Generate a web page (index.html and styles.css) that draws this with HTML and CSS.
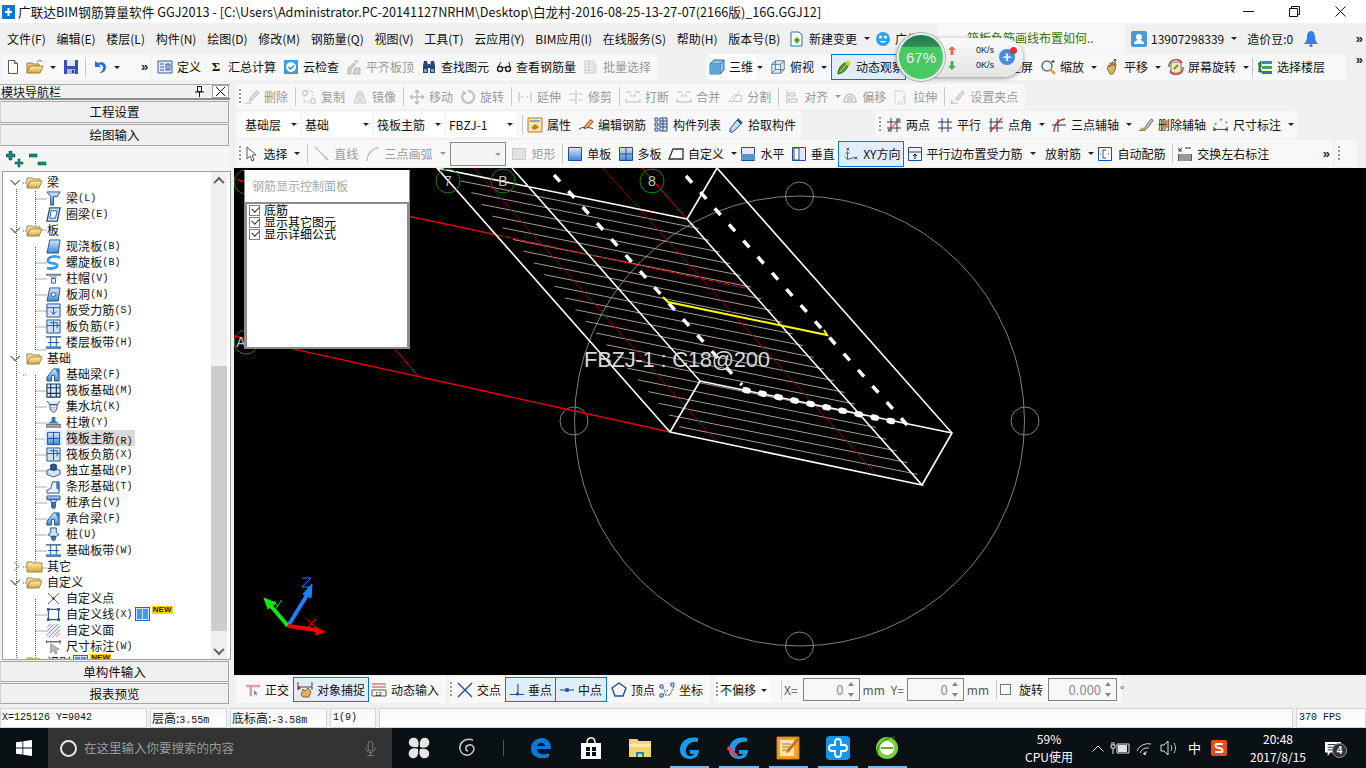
FILE: index.html
```html
<!DOCTYPE html>
<html lang="zh-CN">
<head>
<meta charset="utf-8">
<title>广联达BIM钢筋算量软件 GGJ2013</title>
<link rel="stylesheet" href="styles.css">
</head>
<body>
<svg class="defs" width="0" height="0" aria-hidden="true">
<defs>
<linearGradient id="bl" x1="0" y1="0" x2="0" y2="1"><stop offset="0" stop-color="#d6e9fb"/><stop offset="1" stop-color="#3d86d6"/></linearGradient>
<linearGradient id="fo" x1="0" y1="0" x2="0" y2="1"><stop offset="0" stop-color="#fff2b8"/><stop offset="1" stop-color="#d9a23a"/></linearGradient>
<symbol id="new" viewBox="0 0 16 16"><path d="M3.5 1.5h6l3 3v10h-9z" fill="#fffef2" stroke="#555"/><path d="M9.5 1.5v3h3" fill="#ddd" stroke="#555"/></symbol>
<symbol id="open" viewBox="0 0 18 16"><path d="M1 14V4h5l1 1h6v2" fill="#e9c873" stroke="#a27c2c"/><path d="M1 14l3-7h13l-3 7z" fill="url(#fo)" stroke="#a27c2c"/><path d="M11 3l3-2 2 2" fill="none" stroke="#3d86d6"/></symbol>
<symbol id="save" viewBox="0 0 16 16"><path d="M1 1h14v14H1z" fill="#3b4fae"/><path d="M4 1h8v6H4z" fill="#dfe6f5"/><path d="M4 10h8v5H4z" fill="#a5b5dc"/><path d="M9 11h2v3H9z" fill="#333f80"/></symbol>
<symbol id="undo" viewBox="0 0 16 16"><path d="M3 2v6h6L7 6c3-1 5 1 4 4-.4 1.4-2 3-4 4 4 0 7-2 7-6 0-4-4-6-8-4z" fill="#2f6fc2"/></symbol>
<symbol id="def" viewBox="0 0 16 16"><path d="M1 2h14v12H1z" fill="#dfeafa" stroke="#3b5e96"/><path d="M3 5h4M3 8h4M3 11h4M9 5h4v6H9zM11 5v6" fill="none" stroke="#3b5e96"/></symbol>
<symbol id="cloud" viewBox="0 0 16 16"><path d="M1 1h14v14H1z" fill="#3a9be0"/><path d="M8 3a5 5 0 1 0 .01 0z" fill="#fff"/><path d="M5.500 8l2 2 3.500-3.500" fill="none" stroke="#2c86cf" stroke-width="1.500"/></symbol>
<symbol id="flat" viewBox="0 0 16 16"><path d="M2 15V9l6-5 1 2-4 4v5zM9 9h5v6H7z" fill="#d2d2d2" stroke="#b5b5b5"/><path d="M8 1l5 1-3 3z" fill="#c5c5c5"/></symbol>
<symbol id="bino" viewBox="0 0 16 16"><path d="M2 7l1-5h3l1 5v7H2zM9 7l1-5h3l1 5v7H9zM7 5h2v4H7z" fill="#26437a"/><path d="M3 10h3v3H3zM10 10h3v3h-3z" fill="#7da7e0"/></symbol>
<symbol id="glass" viewBox="0 0 16 16"><circle cx="4" cy="10" r="2.500" fill="none" stroke="#222" stroke-width="1.500"/><circle cx="12" cy="10" r="2.500" fill="none" stroke="#222" stroke-width="1.500"/><path d="M6 9c1-1 3-1 4 0M2 8l3-5M14 8l-1-5" fill="none" stroke="#222"/></symbol>
<symbol id="batch" viewBox="0 0 16 16"><path d="M2 2h9v12H2zM2 5h9M2 8h9M2 11h9M6 2v12M13 6v8" fill="none" stroke="#c8c8c8"/></symbol>
<symbol id="cube" viewBox="0 0 16 16"><path d="M1 5l4-4h10v10l-4 4H1z" fill="#8ec4ea" stroke="#2b6ea6"/><path d="M1 5h10v10M11 5l4-4" fill="none" stroke="#2b6ea6"/><path d="M1 5h10v10H1z" fill="#5da5da"/></symbol>
<symbol id="cube2" viewBox="0 0 18 16"><path d="M2 5l4-4h10v10l-4 4H2z" fill="#e3eff9" stroke="#4a6c8c"/><path d="M2 5h10v10M12 5l4-4M6 1v10h10M6 11l-4 4" fill="none" stroke="#4a6c8c"/></symbol>
<symbol id="orbit" viewBox="0 0 16 16"><path d="M2 15C2 9 6 4 12 3c1 6-4 11-10 12z" fill="#5a9c2a" stroke="#2d6614"/><circle cx="12" cy="4" r="2.500" fill="#e9c92c"/><path d="M4 13l7-8" stroke="#a9d46d"/></symbol>
<symbol id="zoomi" viewBox="0 0 16 16"><circle cx="7" cy="7" r="5" fill="#f3f7fc" stroke="#5b6f90" stroke-width="1.500"/><path d="M10 10l5 5" stroke="#d2a93a" stroke-width="2.500"/><path d="M13 1v3M11.500 2.500h3" stroke="#333"/></symbol>
<symbol id="hand" viewBox="0 0 16 16"><path d="M3 9l2-3 1 2V4l1 0 1 3V3l1 0 1 4 1-3 1 1-1 6-2 4H6z" fill="#dcb367" stroke="#8c6a2a"/><path d="M11 0v4M9.500 1.500L11 0l1.500 1.500" fill="none" stroke="#333"/></symbol>
<symbol id="rotate" viewBox="0 0 16 16"><path d="M3 3h10v11H3z" fill="#fbe8a5" stroke="#2c86cf"/><path d="M1 8a7 7 0 0 1 13-4" fill="none" stroke="#d43c2a" stroke-width="1.500"/><path d="M15 8a7 7 0 0 1-13 4" fill="none" stroke="#d43c2a" stroke-width="1.500"/><path d="M6 10l4-4" stroke="#57a13a" stroke-width="2"/></symbol>
<symbol id="floors" viewBox="0 0 16 16"><path d="M5 2h10v3H5z" fill="#2f8ad6"/><path d="M5 7h10v3H5z" fill="#41a85a"/><path d="M5 12h10v3H5z" fill="#2f6fc2"/><path d="M1 5l3-3v6zM2 4v9h3" fill="#1d7a3c" stroke="#1d7a3c"/></symbol>
<symbol id="gdel" viewBox="0 0 18 16"><path d="M1 15h7M14 1l3 2-8 9-3-2z" fill="#dadada" stroke="#bbb"/><path d="M6 10l-1 4 4-2z" fill="#c7c7c7"/></symbol>
<symbol id="gcopy" viewBox="0 0 16 16"><circle cx="4" cy="4" r="2.500" fill="none" stroke="#bbb"/><circle cx="12" cy="12" r="2.500" fill="none" stroke="#bbb"/><path d="M6 2h6v6M3 7v6h6" fill="none" stroke="#c8c8c8" stroke-dasharray="2 1"/></symbol>
<symbol id="gmirror" viewBox="0 0 16 16"><path d="M8 1v14M6 3L2 14h4zM10 3l4 11h-4z" fill="none" stroke="#c0c0c0"/></symbol>
<symbol id="gmove" viewBox="0 0 16 16"><path d="M8 1v14M1 8h14M8 1L6 3.500M8 1l2 2.500M8 15l-2-2.500M8 15l2-2.500M1 8l2.500-2M1 8l2.500 2M15 8l-2.500-2M15 8l-2.500 2" fill="none" stroke="#bcbcbc" stroke-width="1.300"/></symbol>
<symbol id="grot" viewBox="0 0 16 16"><path d="M8 2a6 6 0 1 1-5 3" fill="none" stroke="#c6c6c6" stroke-width="2.500"/><path d="M2 1l1 6 4-3z" fill="#c6c6c6"/></symbol>
<symbol id="gext" viewBox="0 0 16 16"><path d="M2 3v10M14 3v10" stroke="#bbb"/><path d="M4 8h3M9 8h3" stroke="#bbb" stroke-dasharray="2 1"/></symbol>
<symbol id="gtrim" viewBox="0 0 16 16"><path d="M8 1v14" stroke="#bbb"/><path d="M1 5h6M1 11h6M10 5h5M10 11h5" stroke="#c8c8c8"/></symbol>
<symbol id="gbreak" viewBox="0 0 16 16"><path d="M1 3h5M10 3h5M1 13h14M1 13v-3M15 13v-3" stroke="#bbb" fill="none"/><path d="M5 7h6M5 7l2-2M11 7L9 5" stroke="#c8c8c8" fill="none"/></symbol>
<symbol id="gsplit" viewBox="0 0 18 16"><path d="M2 13l6-7h8v7zM14 1l-8 13" fill="none" stroke="#c0c0c0"/></symbol>
<symbol id="galign" viewBox="0 0 16 16"><path d="M3 1v14M5 4h6v3H5zM5 10h8v3H5z" fill="none" stroke="#bbb"/></symbol>
<symbol id="goff" viewBox="0 0 16 16"><path d="M2 13a6 8 0 0 1 12 0z" fill="none" stroke="#c5c5c5" stroke-width="1.500"/><path d="M5 11a3 4 0 0 1 6 0z" fill="#ddd" stroke="#c5c5c5"/></symbol>
<symbol id="gstretch" viewBox="0 0 16 16"><path d="M2 2h7l3 3v10H2zM5 13h8M11 7v6" fill="none" stroke="#c6c6c6" stroke-dasharray="2 1"/></symbol>
<symbol id="gpts" viewBox="0 0 18 16"><path d="M1 15h8M14 1l2 2-7 9-3-2z" fill="#ddd" stroke="#bbb"/><path d="M1 12h2v3H1z" fill="#bbb"/></symbol>
<symbol id="attr" viewBox="0 0 16 16"><path d="M1 1h14v14H1z" fill="#fbe7b8" stroke="#bb7a1c"/><path d="M3 3h10v2H3z" fill="#7da7e0"/><path d="M4 11l4-4 4 3-4 3z" fill="#c97b14"/></symbol>
<symbol id="edit" viewBox="0 0 18 16"><path d="M1 13c3-3 9-3 16-1" fill="none" stroke="#222"/><path d="M8 9l6-7 3 2-6 7-4 1z" fill="#e8b54b" stroke="#9a2a2a"/></symbol>
<symbol id="list" viewBox="0 0 16 16"><path d="M2 1h3v3H2zM2 6h3v3H2zM2 11h3v3H2zM7 1h7v13H7zM7 4h7M7 7h7M7 10h7M10 1v13" fill="#dfeafa" stroke="#2b4f80"/></symbol>
<symbol id="pick" viewBox="0 0 16 16"><path d="M9 3l4 4-8 8-3 0 0-3z" fill="#bcd8f2" stroke="#27508a"/><path d="M10 1l5 5-2 1-4-4z" fill="#2b4f80"/></symbol>
<symbol id="two" viewBox="0 0 16 16"><path d="M1 5h14M1 11h14M5 1v14M11 1v14" stroke="#233a6e"/><path d="M2 15L14 1" stroke="#d13a2a"/><circle cx="3" cy="13" r="1.300" fill="#2c9a3a"/><circle cx="13" cy="3" r="1.300" fill="#2c9a3a"/></symbol>
<symbol id="para" viewBox="0 0 16 16"><path d="M1 5h14M1 11h14M5 1v14M11 1v14" stroke="#233a6e" fill="none"/></symbol>
<symbol id="angle" viewBox="0 0 16 16"><path d="M3 1v14M9 1v14M1 5h14M1 11h14" stroke="#233a6e"/><path d="M2 15L14 1" stroke="#d13a2a" stroke-width="1.300"/></symbol>
<symbol id="arc3" viewBox="0 0 16 16"><path d="M3 15C3 7 7 3 14 2" fill="none" stroke="#d13a2a" stroke-width="1.300"/><path d="M1 8h14M7 2v13" stroke="#233a6e"/></symbol>
<symbol id="delax" viewBox="0 0 18 16"><path d="M1 14h8" stroke="#456"/><path d="M9 9l6-8 2 2-6 8-4 2z" fill="#e4c58b" stroke="#3a5a96"/><path d="M3 11h5v3H3z" fill="#c9a14a"/></symbol>
<symbol id="dim" viewBox="0 0 18 16"><path d="M1 10v5M16 10v5M1 13h15M1 13l2-1M1 13l2 1M16 13l-2-1M16 13l-2 1" stroke="#333" fill="none"/><path d="M2 6h2v2H2zM8 1h2v2H8zM14 4h2v2h-2z" fill="#38a84b"/></symbol>
<symbol id="arrow" viewBox="0 0 16 16"><path d="M4 1v12l3-3 2 5 2-1-2-5h4z" fill="#fff" stroke="#555"/></symbol>
<symbol id="gline" viewBox="0 0 16 16"><path d="M1 1l13 13" stroke="#bbb" stroke-width="1.300"/><path d="M14 14l-4-1 3-3z" fill="#c6c6c6"/></symbol>
<symbol id="garc" viewBox="0 0 16 16"><path d="M2 15C2 8 6 4 12 2" fill="none" stroke="#bbb" stroke-width="1.300"/><circle cx="12" cy="2" r="1.500" fill="#ccc"/><circle cx="5" cy="7" r="1.300" fill="#ccc"/></symbol>
<symbol id="grect" viewBox="0 0 16 16"><path d="M1.500 2.500h13v11h-13z" fill="#e2e2e2" stroke="#c9c9c9"/></symbol>
<symbol id="single" viewBox="0 0 16 16"><path d="M1.500 1.500h13v13h-13z" fill="url(#bl)" stroke="#224f90"/></symbol>
<symbol id="multi" viewBox="0 0 16 16"><path d="M1.500 1.500h13v13h-13z" fill="url(#bl)" stroke="#224f90"/><path d="M8 1v14M1 8h14" stroke="#224f90"/></symbol>
<symbol id="cust" viewBox="0 0 16 16"><path d="M1 13l4-10h10v10z" fill="#fff" stroke="#333" stroke-width="1.300"/></symbol>
<symbol id="horiz" viewBox="0 0 16 16"><path d="M1.500 1.500h13v13h-13z" fill="#dfeafa" stroke="#224f90"/><path d="M1 8h14v6H1z" fill="#5b92d4"/></symbol>
<symbol id="vert" viewBox="0 0 16 16"><path d="M1.500 1.500h13v13h-13z" fill="#dfeafa" stroke="#224f90"/><path d="M3 2h5v12H3z" fill="#fff" stroke="#224f90"/></symbol>
<symbol id="xy" viewBox="0 0 18 16"><path d="M5 6v8M5 14l8-2" fill="none" stroke="#1d4f96"/><path d="M4 1l3 3M7 1L4 4M13 11l3 3M16 11l-3 3" stroke="#333"/><path d="M3 8l2-3 2 3M2 11l3 3" stroke="#2b8a3a" fill="none"/></symbol>
<symbol id="parb" viewBox="0 0 16 16"><path d="M1.500 1.500h13v13h-13z" fill="#eaf2fb" stroke="#224f90"/><path d="M1 6h14" stroke="#224f90"/><path d="M8 13V8M6 10l2-2 2 2" stroke="#111" fill="none"/></symbol>
<symbol id="auto" viewBox="0 0 16 16"><path d="M1.500 1.500h13v13h-13z" fill="#fff" stroke="#1d4f96"/><path d="M9 4H6v8h3" fill="none" stroke="#1d4f96"/><path d="M3 8h2M11 8h2" stroke="#1d4f96" stroke-dasharray="1 1"/></symbol>
<symbol id="swap" viewBox="0 0 16 16"><path d="M1 8h14v7H1z" fill="#555"/><path d="M3 8v7M5 8v7M7 8v7M9 8v7M11 8v7M13 8v7" stroke="#ddd"/><path d="M2 5l3-3M8 2h6M2 2v3h3" stroke="#333" fill="none"/></symbol>
<symbol id="ortho" viewBox="0 0 18 16"><path d="M1 2h16v3H1zM5 2h3v13H5z" fill="#d9a3a3"/><path d="M10 8v6l1.500-1.500 1 2 1-.5-1-2h2z" fill="#888"/></symbol>
<symbol id="snap" viewBox="0 0 16 16"><path d="M1 0v8M15 0v8M1 5h14" stroke="#7a2a2a"/><path d="M4 13l2-6 2 2 3-3 3 4-2 5H6z" fill="#d8b45e" stroke="#8c6a2a"/><circle cx="2" cy="6" r="1.500" fill="#9a3a2a"/></symbol>
<symbol id="dyn" viewBox="0 0 16 16"><path d="M1 2h14M1 5h14" stroke="#a84a4a"/><path d="M1 8h14v6H1z" fill="#fff" stroke="#555"/><text x="4" y="13.500" font-size="6" font-family="Liberation Sans">12</text></symbol>
<symbol id="cross" viewBox="0 0 16 16"><path d="M1 1l14 14M15 1L1 15" stroke="#1d4f96" stroke-width="1.400"/></symbol>
<symbol id="perp" viewBox="0 0 18 16"><path d="M1 13h16M10 1v12" stroke="#1d4f96" stroke-width="1.200"/><path d="M8 11h3v3H8z" fill="#1d4f96"/></symbol>
<symbol id="mid" viewBox="0 0 18 16"><path d="M1 8h16" stroke="#1d4f96" stroke-width="1.200"/><path d="M7 6h4v4H7z" fill="#1d4f96"/></symbol>
<symbol id="vertex" viewBox="0 0 16 16"><path d="M8 1l7 5-3 8H4L1 6z" fill="none" stroke="#1d4f96" stroke-width="1.400"/></symbol>
<symbol id="coord" viewBox="0 0 16 16"><path d="M3 13h8l4-9M3 13l6-5M3 5l3 4" fill="none" stroke="#1d4f96" stroke-dasharray="2 1"/><path d="M1 3h3v3H1zM12 1h3v3h-3zM1 12h3v3H1z" fill="#fff" stroke="#1d4f96"/></symbol>
<symbol id="doc" viewBox="0 0 16 16"><path d="M2 1h8l3 3v11H2z" fill="#fff" stroke="#2b6ea6"/><path d="M5 9l3-3 3 3-3 4z" fill="#4da326"/></symbol>
<symbol id="smile" viewBox="0 0 16 16"><circle cx="8" cy="8" r="7" fill="#29a3ea"/><circle cx="5.500" cy="6" r="1.600" fill="#fff"/><circle cx="10.500" cy="6" r="1.600" fill="#fff"/><path d="M5 10c1 2 5 2 6 0z" fill="#fff"/></symbol>
<symbol id="user" viewBox="0 0 16 16"><path d="M0 2a2 2 0 0 1 2-2h12a2 2 0 0 1 2 2v12a2 2 0 0 1-2 2H2a2 2 0 0 1-2-2z" fill="#4b9ad6"/><circle cx="8" cy="6" r="3" fill="#fff"/><path d="M3 13c0-3 3-4 5-4s5 1 5 4z" fill="#fff"/></symbol>
<symbol id="bell" viewBox="0 0 16 16"><path d="M8 0c-3 0-4 3-4 6 0 3-1 5-3 7h14c-2-2-3-4-3-7 0-3-1-6-4-6z" fill="#2f80ed"/><circle cx="8" cy="14.500" r="1.500" fill="#2f80ed"/></symbol>
<symbol id="tplus" viewBox="0 0 18 18"><path d="M3 0h3v3h3v3H6v3H3V6H0V3h3zM12 8h2v3h3v2h-3v3h-2v-3H9v-2h3z" fill="#17897c" stroke="#083f3a" stroke-width=".5"/></symbol>
<symbol id="tminus" viewBox="0 0 18 18"><path d="M0 3h8v3H0zM9 11h8v3H9z" fill="#17897c" stroke="#083f3a" stroke-width=".5"/></symbol>
<symbol id="fopen" viewBox="0 0 17 13"><path d="M1 12V2h5l1 1h7v2" fill="#f5e2a8" stroke="#a68338"/><path d="M1 12l3-7h12l-3 7z" fill="url(#fo)" stroke="#a68338"/></symbol>
<symbol id="fclose" viewBox="0 0 17 13"><path d="M1 12V2h5l1 1h9v9z" fill="url(#fo)" stroke="#a68338"/></symbol>
<symbol id="beam" viewBox="0 0 16 16"><path d="M1 1h14l-3 5H8v9H5V6z" fill="url(#bl)" stroke="#224f90"/></symbol>
<symbol id="ring" viewBox="0 0 16 16"><path d="M4 1h11l-3 14H1z" fill="#dfeafa" stroke="#224f90" stroke-width="1.400"/><path d="M5.500 4h6.500l-2 8H4z" fill="#fff" stroke="#224f90"/></symbol>
<symbol id="slab" viewBox="0 0 16 16"><path d="M4 1h11l-2 14H1z" fill="url(#bl)" stroke="#224f90"/></symbol>
<symbol id="spiral" viewBox="0 0 16 16"><path d="M15 3C9 0 2 2 2 6s10 2 10 5-6 4-11 3" fill="none" stroke="#3f9be6" stroke-width="3"/></symbol>
<symbol id="cap" viewBox="0 0 16 16"><path d="M0 3h16v2H0z" fill="#777"/><path d="M3 5h10l-3 3H6z" fill="#9ac0ea"/><path d="M6 8h4v5H6z" fill="#fff" stroke="#224f90"/></symbol>
<symbol id="hole" viewBox="0 0 16 16"><path d="M4 1h11l-2 14H1z" fill="url(#bl)" stroke="#224f90"/><ellipse cx="8" cy="8" rx="2.500" ry="2" fill="#fff" stroke="#224f90"/></symbol>
<symbol id="rebar" viewBox="0 0 16 16"><path d="M1 1h14v14H1z" fill="#cfe2f7" stroke="#224f90"/><path d="M1 5h14M8 5v7M5 9l3 3 3-3" fill="none" stroke="#224f90"/></symbol>
<symbol id="neg" viewBox="0 0 16 16"><path d="M1 1h14v14H1z" fill="#cfe2f7" stroke="#224f90"/><path d="M1 7h14M4 4h8v6M8 2v12" fill="none" stroke="#224f90"/></symbol>
<symbol id="band" viewBox="0 0 16 16"><path d="M0 2h16M0 14h16" stroke="#224f90" stroke-width="1.500"/><path d="M5 2v12M11 2v12M2 8h12" stroke="#224f90"/><path d="M0 12h16v2H0z" fill="#4a8ad0"/></symbol>
<symbol id="fbeam" viewBox="0 0 16 16"><path d="M1 15V11L8 2h6v13H9V9H6v6z" fill="url(#bl)" stroke="#224f90"/><path d="M10 2l4 0 0 9z" fill="#3b77bd"/></symbol>
<symbol id="raft" viewBox="0 0 16 16"><path d="M1 1h14v14H1zM1 5h14M1 11h14M5 1v14M11 1v14" fill="#dce9f8" stroke="#12346a" stroke-width="1.200"/></symbol>
<symbol id="pit" viewBox="0 0 16 16"><path d="M1 2l3 4h8l3-4M4 6c0 5 2 8 4 8s4-3 4-8z" fill="#dfeafa" stroke="#224f90"/><path d="M5 9h6M6 11h4" stroke="#7a8ea8" stroke-dasharray="1 1"/></symbol>
<symbol id="pier" viewBox="0 0 16 16"><path d="M6 2h4v4l4 3H2l4-3z" fill="#3b77bd"/><path d="M0 10h16v3H0z" fill="#aaa" stroke="#666"/></symbol>
<symbol id="iso" viewBox="0 0 16 16"><path d="M1 8l7-3 7 3v4l-7 3-7-3z" fill="#cfe2f7" stroke="#224f90"/><path d="M5 5V2l3-1 3 1v5l-3 1-3-1z" fill="#2b5a9a" stroke="#12346a"/></symbol>
<symbol id="strip" viewBox="0 0 16 16"><path d="M1 15V12l4-2 2-7h7v12z" fill="#e8f0fa" stroke="#224f90"/><path d="M11 3l3 0 0 9-3-2z" fill="#3b77bd"/></symbol>
<symbol id="pilecap" viewBox="0 0 16 16"><path d="M1 1h14v4H1z" fill="url(#bl)" stroke="#224f90"/><path d="M4 5h8l-2 3H6z" fill="#cfe2f7" stroke="#224f90"/><path d="M6 8h4v5l-2 2-2-2z" fill="#3b77bd" stroke="#224f90"/></symbol>
<symbol id="pile" viewBox="0 0 16 16"><path d="M5 1h6v5l3 2-3 2H5l-3-2 3-2z" fill="#cfe2f7" stroke="#224f90"/><path d="M6 10h4v3l-2 2-2-2z" fill="#3b77bd" stroke="#224f90"/></symbol>
<symbol id="cpt" viewBox="0 0 16 16"><path d="M2 2l12 12M14 2L2 14" stroke="#2b62a8"/><circle cx="8" cy="8" r="1.500" fill="#2b62a8"/></symbol>
<symbol id="cline" viewBox="0 0 16 16"><path d="M2.500 2.500h11v11h-11z" fill="none" stroke="#224f90" stroke-width="1.200"/><path d="M1 1h3v3H1zM12 1h3v3h-3zM1 12h3v3H1zM12 12h3v3h-3z" fill="#2b62a8"/></symbol>
<symbol id="cface" viewBox="0 0 16 16"><path d="M1 5l4-4M1 9l8-8M1 13L13 1M3 15L15 3M7 15l8-8M11 15l4-4" stroke="#3f7fc9"/></symbol>
<symbol id="cdim" viewBox="0 0 16 16"><path d="M0 1v4M15 1v4M0 3h15" stroke="#222"/><path d="M5 5v10l3-3 2 4 2-1-2-4h4z" fill="#bbb" stroke="#999"/></symbol>
<symbol id="win" viewBox="0 0 16 16"><path d="M0 2.300l6.500-.9v6.200H0zM7.300 1.300L16 0v7.600H7.300zM0 8.400h6.500v6.200L0 13.700zM7.300 8.400H16V16l-8.700-1.200z" fill="#fff"/></symbol>
<symbol id="mic" viewBox="0 0 14 20"><rect x="4" y="1" width="6" height="12" rx="3" fill="none" stroke="#8f8f8f"/><path d="M1 9c0 8 12 8 12 0M7 15v4M3 19h8" fill="none" stroke="#8f8f8f"/></symbol>
<symbol id="fan" viewBox="0 0 22 22"><g fill="#e6e6e6"><path d="M10 10C3 11 0 8 1 4s6-4 8-2 2 5 1 8z"/><path d="M12 10c-1-7 2-10 6-9s4 6 2 8-5 2-8 1z"/><path d="M12 12c7-1 10 2 9 6s-6 4-8 2-2-5-1-8z"/><path d="M10 12c1 7-2 10-6 9s-4-6-2-8 5-2 8-1z"/></g></symbol>
<symbol id="swirl" viewBox="0 0 20 20"><path d="M15 2c-8-3-14 3-13 9s8 8 12 4 1-9-3-8-4 5-1 6" fill="none" stroke="#c9c9c9" stroke-width="1.500"/></symbol>
<symbol id="edge" viewBox="0 0 22 22"><path d="M1 12C1 5 6 1 12 1c6 0 9 5 9 11H7c0 5 7 7 12 4v4c-7 3-18 1-18-8z" fill="#0a78d7"/><path d="M7 9h8c0-4-7-4-8 0z" fill="#0a1114"/></symbol>
<symbol id="store" viewBox="0 0 22 24"><path d="M1 7h20v16H1z" fill="#fff"/><path d="M7 7c0-7 8-7 8 0" fill="none" stroke="#fff" stroke-width="1.500"/><path d="M6 11h4v4H6zM12 11h4v4h-4zM6 16h4v4H6zM12 16h4v4h-4z" fill="#0a1114"/></symbol>
<symbol id="folder" viewBox="0 0 22 20"><path d="M0 1h8l2 2h12v16H0z" fill="#f5d66c"/><path d="M0 6h22v3H0z" fill="#fbe9a8"/><path d="M7 14h8v5H7z" fill="#1b83d4"/><path d="M9 16h4v3H9z" fill="#f5d66c"/></symbol>
<symbol id="gg" viewBox="0 0 24 24"><path d="M20 2c-10-2-18 3-18 12 0 6 5 9 10 9 6 0 9-4 9-9h-9v4h4c-1 2-3 2-4 2-3 0-5-3-4-7 1-5 6-8 12-7z" fill="#1a9be8"/></symbol>
<symbol id="gg2" viewBox="0 0 24 24"><path d="M20 2c-10-2-18 3-18 12 0 6 5 9 10 9 6 0 9-4 9-9h-9v4h4c-1 2-3 2-4 2-3 0-5-3-4-7 1-5 6-8 12-7z" fill="#1a9be8"/><path d="M1 10l10 9-2 3L0 13z" fill="#d8484a"/></symbol>
<symbol id="note" viewBox="0 0 24 24"><path d="M1 1h22v22H1z" fill="#f6a323" stroke="#c97a0a"/><path d="M4 4h14v16H4z" fill="#fde7a8"/><path d="M6 8h9M6 11h9M6 14h7" stroke="#a87a1a"/><path d="M21 2l2 2-10 12-3 1 1-3z" fill="#d3662a"/></symbol>
<symbol id="bplus" viewBox="0 0 24 24"><rect width="24" height="24" rx="4" fill="#1296f0"/><path d="M12 3a3 3 0 0 1 3 3v3h3a3 3 0 0 1 0 6h-3v3a3 3 0 0 1-6 0v-3H6a3 3 0 0 1 0-6h3V6a3 3 0 0 1 3-3z" fill="none" stroke="#fff" stroke-width="1.800"/></symbol>
<symbol id="ge" viewBox="0 0 24 24"><circle cx="12" cy="12" r="11" fill="#7bcf3a"/><circle cx="12" cy="12" r="7" fill="#fff"/><path d="M6 11h12v2H6z" fill="#5ab02a"/><path d="M3 20C0 12 6 2 20 1" fill="none" stroke="#1e7a2a"/></symbol>
<symbol id="sogou" viewBox="0 0 16 16"><rect width="16" height="16" rx="2" fill="#e8491d"/><path d="M12 4H6c-2 0-2 3 0 3.500l4 1c2 .5 2 3.500 0 3.500H4" fill="none" stroke="#fff" stroke-width="2"/></symbol>
<symbol id="wifi" viewBox="0 0 18 16"><path d="M1 11a12 12 0 0 1 14-7M4 13a8 8 0 0 1 9-5M7 14a4 4 0 0 1 4-2" fill="none" stroke="#d0d0d0"/><circle cx="9" cy="14" r="1" fill="#fff"/></symbol>
<symbol id="spk" viewBox="0 0 18 16"><path d="M1 5h3l4-4v14l-4-4H1z" fill="none" stroke="#e0e0e0"/><path d="M11 5c1 2 1 4 0 6M14 3c2 3 2 7 0 10" fill="none" stroke="#c9c9c9"/></symbol>
<symbol id="batt" viewBox="0 0 20 14"><path d="M7 3h12v9H7z" fill="none" stroke="#e0e0e0"/><path d="M8 4h9v7H8z" fill="#e0e0e0"/><path d="M1 4h4v3H1zM2 1v3M4 1v3M3 7v6" stroke="#e0e0e0" fill="none"/></symbol>
<symbol id="noti" viewBox="0 0 20 18"><path d="M1 1h18v12H7l-3 4v-4H1z" fill="#fff"/><path d="M4 4h12M4 7h12M4 10h8" stroke="#0a1114"/></symbol>
</defs>
</svg>

<div class="page">
  <header class="title">
    <svg class="ticon" viewBox="0 0 13 14"><rect width="13" height="14" fill="#0a78d7"/><path d="M6.500 3v8M3 7h7" stroke="#fff" stroke-width="2"/></svg>
    <span>广联达BIM钢筋算量软件 GGJ2013 - [C:\Users\Administrator.PC-20141127NRHM\Desktop\白龙村-2016-08-25-13-27-07(2166版)_16G.GGJ12]</span>
    <div class="winctl">
      <svg width="11" height="1" viewBox="0 0 11 1"><path d="M0 .5h11" stroke="#111"/></svg>
      <svg width="11" height="11" viewBox="0 0 11 11"><path d="M.5 2.500h8v8h-8zM2.500 2.500v-2h8v8h-2" fill="none" stroke="#111"/></svg>
      <svg width="11" height="11" viewBox="0 0 11 11"><path d="M.5.500l10 10M10.500.500l-10 10" stroke="#111"/></svg>
    </div>
  </header>

  <nav class="menu">
    <span>文件(F)</span><span>编辑(E)</span><span>楼层(L)</span><span>构件(N)</span><span>绘图(D)</span><span>修改(M)</span><span>钢筋量(Q)</span><span>视图(V)</span><span>工具(T)</span><span>云应用(Y)</span><span>BIM应用(I)</span><span>在线服务(S)</span><span>帮助(H)</span><span>版本号(B)</span>
    <div class="mextra">
      <span class="it"><svg class="ic"><use href="#doc"/></svg>新建变更<i class="dd"></i></span>
      <span class="it m11"><svg class="ic"><use href="#smile"/></svg>广告</span>
      <span class="tip">筏板负筋画线布置如何..</span>
      <span class="it m6"><svg class="ic"><use href="#user"/></svg>13907298339<i class="dd"></i></span>
      <span class="m10">造价豆:0</span>
      <svg class="ic m10 bell"><use href="#bell"/></svg>
      <b class="more mr">»</b>
    </div>
  </nav>

  <div class="bar tb1">
    <div class="grp g1a">
      <svg class="ic"><use href="#new"/></svg>
      <svg class="ic w18"><use href="#open"/></svg><i class="dd n4"></i>
      <svg class="ic m2"><use href="#save"/></svg>
      <i class="sep s3"></i>
      <svg class="ic"><use href="#undo"/></svg><i class="dd n4"></i>
      <b class="more m16">»</b>
    </div>
    <div class="grp g1b">
      <span class="it"><svg class="ic"><use href="#def"/></svg>定义</span>
      <span class="it"><b class="sigma">Σ</b>汇总计算</span>
      <span class="it"><svg class="ic"><use href="#cloud"/></svg>云检查</span>
      <span class="it off"><svg class="ic"><use href="#flat"/></svg>平齐板顶</span>
      <span class="it"><svg class="ic"><use href="#bino"/></svg>查找图元</span>
      <span class="it"><svg class="ic"><use href="#glass"/></svg>查看钢筋量</span>
      <span class="it off"><svg class="ic"><use href="#batch"/></svg>批量选择</span>
    </div>
    <b class="more g1more">»</b>
    <div class="grp g1c">
      <span class="it white"><svg class="ic"><use href="#cube"/></svg>三维</span><i class="dd d7"></i>
      <span class="it"><svg class="ic"><use href="#cube2"/></svg>俯视<i class="dd"></i></span>
      <span class="it on w75"><svg class="ic"><use href="#orbit"/></svg>动态观察</span>
      <span class="it m104">全屏</span>
      <span class="it"><svg class="ic"><use href="#zoomi"/></svg>缩放<i class="dd"></i></span>
      <span class="it"><svg class="ic"><use href="#hand"/></svg>平移<i class="dd"></i></span>
      <span class="it"><svg class="ic"><use href="#rotate"/></svg>屏幕旋转<i class="dd"></i></span>
      <i class="sep"></i>
      <span class="it"><svg class="ic"><use href="#floors"/></svg>选择楼层</span>
    </div>
    <b class="more mr">»</b>
  </div>

  <div class="work">
    <aside class="nav">
      <div class="navhead"><span>模块导航栏</span>
        <svg class="pin" width="9" height="11" viewBox="0 0 9 11"><path d="M2.500.500h4v5h-4zM0 6h9M4.500 6v5" fill="none" stroke="#111"/></svg>
        <span class="navx"><svg width="9" height="9" viewBox="0 0 9 9"><path d="M0 0l9 9M9 0L0 9" stroke="#111"/></svg></span>
      </div>
      <div class="navbtn">工程设置</div>
      <div class="navbtn">绘图输入</div>
      <div class="treetools">
        <svg width="18" height="18"><use href="#tplus"/></svg>
        <svg width="18" height="18"><use href="#tminus"/></svg>
      </div>
      <div class="treebox">
        <div class="tree">
          <svg class="guides" width="208" height="486" viewBox="0 0 208 486">
            <path d="M13.500 16v470M32.500 18v39H44M32.500 26H44M32.500 74v103H44M32.500 90H44M32.500 106H44M32.500 122H44M32.500 138H44M32.500 154H44M32.500 202v193H44M32.500 218H44M32.500 234H44M32.500 250H44M32.500 266H44M32.500 282H44M32.500 298H44M32.500 314H44M32.500 330H44M32.500 346H44M32.500 362H44M32.500 378H44M32.500 426v65H44M32.500 442H44M32.500 458H44M20 10h4M20 58h4M20 202h4M20 394h4M20 410h4" fill="none" stroke="#555" stroke-dasharray="1 1"/>
          </svg>
          <div class="r top"><i class="chev"></i><svg class="fd"><use href="#fopen"/></svg>梁</div>
          <div class="r"><svg class="ti"><use href="#beam"/></svg>梁<b>(L)</b></div>
          <div class="r"><svg class="ti"><use href="#ring"/></svg>圈梁<b>(E)</b></div>
          <div class="r top"><i class="chev"></i><svg class="fd"><use href="#fopen"/></svg>板</div>
          <div class="r"><svg class="ti"><use href="#slab"/></svg>现浇板<b>(B)</b></div>
          <div class="r"><svg class="ti"><use href="#spiral"/></svg>螺旋板<b>(B)</b></div>
          <div class="r"><svg class="ti"><use href="#cap"/></svg>柱帽<b>(V)</b></div>
          <div class="r"><svg class="ti"><use href="#hole"/></svg>板洞<b>(N)</b></div>
          <div class="r"><svg class="ti"><use href="#rebar"/></svg>板受力筋<b>(S)</b></div>
          <div class="r"><svg class="ti"><use href="#neg"/></svg>板负筋<b>(F)</b></div>
          <div class="r"><svg class="ti"><use href="#band"/></svg>楼层板带<b>(H)</b></div>
          <div class="r top"><i class="chev"></i><svg class="fd"><use href="#fopen"/></svg>基础</div>
          <div class="r"><svg class="ti"><use href="#fbeam"/></svg>基础梁<b>(F)</b></div>
          <div class="r"><svg class="ti"><use href="#raft"/></svg>筏板基础<b>(M)</b></div>
          <div class="r"><svg class="ti"><use href="#pit"/></svg>集水坑<b>(K)</b></div>
          <div class="r"><svg class="ti"><use href="#pier"/></svg>柱墩<b>(Y)</b></div>
          <div class="r cur"><svg class="ti"><use href="#multi"/></svg><span class="sel">筏板主筋<b>(R)</b></span></div>
          <div class="r"><svg class="ti"><use href="#neg"/></svg>筏板负筋<b>(X)</b></div>
          <div class="r"><svg class="ti"><use href="#iso"/></svg>独立基础<b>(P)</b></div>
          <div class="r"><svg class="ti"><use href="#strip"/></svg>条形基础<b>(T)</b></div>
          <div class="r"><svg class="ti"><use href="#pilecap"/></svg>桩承台<b>(V)</b></div>
          <div class="r"><svg class="ti"><use href="#fbeam"/></svg>承台梁<b>(F)</b></div>
          <div class="r"><svg class="ti"><use href="#pile"/></svg>桩<b>(U)</b></div>
          <div class="r"><svg class="ti"><use href="#band"/></svg>基础板带<b>(W)</b></div>
          <div class="r top"><i class="chev shut"></i><svg class="fd"><use href="#fclose"/></svg>其它</div>
          <div class="r top"><i class="chev"></i><svg class="fd"><use href="#fopen"/></svg>自定义</div>
          <div class="r"><svg class="ti"><use href="#cpt"/></svg>自定义点</div>
          <div class="r"><svg class="ti"><use href="#cline"/></svg>自定义线<b>(X)</b><span class="newb"><i></i><i></i></span><em class="new">NEW</em></div>
          <div class="r"><svg class="ti"><use href="#cface"/></svg>自定义面</div>
          <div class="r"><svg class="ti"><use href="#cdim"/></svg>尺寸标注<b>(W)</b></div>
          <div class="r top"><i class="chev"></i><svg class="fd"><use href="#fopen"/></svg>识别<span class="newb"><i></i><i></i></span><em class="new">NEW</em></div>
        </div>
        <div class="sb">
          <span class="sba up"></span>
          <span class="sbgap"></span>
          <span class="sbt"></span>
          <span class="sba dn"></span>
        </div>
      </div>
      <div class="navbtn low">单构件输入</div>
      <div class="navbtn low">报表预览</div>
    </aside>

    <main class="right">
      <div class="bar r2">
        <div class="grp g2a off">
          <i class="grip"></i>
          <span class="it"><svg class="ic"><use href="#gdel"/></svg>删除</span><i class="sep"></i>
          <span class="it"><svg class="ic"><use href="#gcopy"/></svg>复制</span>
          <span class="it"><svg class="ic"><use href="#gmirror"/></svg>镜像</span><i class="sep"></i>
          <span class="it"><svg class="ic"><use href="#gmove"/></svg>移动</span>
          <span class="it"><svg class="ic"><use href="#grot"/></svg>旋转</span><i class="sep"></i>
          <span class="it"><svg class="ic"><use href="#gext"/></svg>延伸</span>
          <span class="it"><svg class="ic"><use href="#gtrim"/></svg>修剪</span><i class="sep"></i>
          <span class="it"><svg class="ic"><use href="#gbreak"/></svg>打断</span>
          <span class="it"><svg class="ic"><use href="#gbreak"/></svg>合并</span>
          <span class="it"><svg class="ic"><use href="#gsplit"/></svg>分割</span><i class="sep"></i>
          <span class="it"><svg class="ic"><use href="#galign"/></svg>对齐<i class="dd"></i></span>
          <span class="it"><svg class="ic"><use href="#goff"/></svg>偏移</span>
          <span class="it"><svg class="ic"><use href="#gstretch"/></svg>拉伸</span><i class="sep"></i>
          <span class="it"><svg class="ic"><use href="#gpts"/></svg>设置夹点</span>
        </div>
      </div>

      <div class="bar r3">
        <div class="grp g3a">
          <span class="combo c59">基础层<i class="dd"></i></span>
          <span class="combo c69">基础<i class="dd"></i></span>
          <span class="combo c69">筏板主筋<i class="dd"></i></span>
          <span class="combo c69">FBZJ-1<i class="dd"></i></span>
          <i class="sep"></i>
          <span class="it"><svg class="ic"><use href="#attr"/></svg>属性</span>
          <span class="it"><svg class="ic"><use href="#edit"/></svg>编辑钢筋</span>
          <span class="it"><svg class="ic"><use href="#list"/></svg>构件列表</span>
          <span class="it"><svg class="ic"><use href="#pick"/></svg>拾取构件</span>
        </div>
        <div class="grp g3b">
          <i class="grip"></i>
          <span class="it"><svg class="ic"><use href="#two"/></svg>两点</span>
          <span class="it"><svg class="ic"><use href="#para"/></svg>平行</span>
          <span class="it"><svg class="ic"><use href="#angle"/></svg>点角<i class="dd"></i></span>
          <span class="it"><svg class="ic"><use href="#arc3"/></svg>三点辅轴<i class="dd"></i></span>
          <span class="it"><svg class="ic"><use href="#delax"/></svg>删除辅轴</span>
          <span class="it"><svg class="ic"><use href="#dim"/></svg>尺寸标注<i class="dd"></i></span>
        </div>
      </div>

      <div class="bar r4">
        <div class="grp g4a">
          <i class="grip"></i>
          <span class="it"><svg class="ic"><use href="#arrow"/></svg>选择<i class="dd"></i></span><i class="sep s0"></i>
          <span class="it off"><svg class="ic"><use href="#gline"/></svg>直线</span>
          <span class="it off"><svg class="ic"><use href="#garc"/></svg>三点画弧<i class="dd dk"></i></span>
          <span class="cbox"><i class="dd"></i></span>
          <span class="it off"><svg class="ic"><use href="#grect"/></svg>矩形</span><i class="sep"></i>
          <span class="it"><svg class="ic"><use href="#single"/></svg>单板</span>
          <span class="it"><svg class="ic"><use href="#multi"/></svg>多板</span>
          <span class="it"><svg class="ic"><use href="#cust"/></svg>自定义<i class="dd dk"></i></span>
          <span class="it"><svg class="ic"><use href="#horiz"/></svg>水平</span>
          <span class="it"><svg class="ic"><use href="#vert"/></svg>垂直</span>
          <span class="it on w66 nm"><svg class="ic"><use href="#xy"/></svg>XY方向</span>
          <span class="it nm2"><svg class="ic"><use href="#parb"/></svg>平行边布置受力筋<i class="dd"></i></span>
          <span class="it m3">放射筋<i class="dd dk"></i></span>
          <span class="it"><svg class="ic"><use href="#auto"/></svg>自动配筋</span><i class="sep"></i>
          <span class="it"><svg class="ic"><use href="#swap"/></svg>交换左右标注</span>
          <b class="more m50">»</b>
        </div>
        <div class="griptail"><i class="grip"></i></div>
      </div>

      <div class="canvas">
        <svg class="draw" width="1132" height="507" viewBox="234 168 1132 507">
          <g fill="none" stroke="#808080" stroke-width="1">
            <circle cx="799.500" cy="421" r="225"/>
            <circle cx="799.500" cy="196" r="14"/><circle cx="574" cy="421" r="14"/><circle cx="1025" cy="421" r="14"/><circle cx="799.500" cy="646" r="14"/>
          </g>
          <g stroke="#a89a92" stroke-width="1" fill="none">
            <path d="M461 181l238 47.600M471.400 192.700l238 47.600M481.800 204.400l238 47.600M492.200 216.100l238 47.600M502.600 227.800l238 47.600M513 239.500l238 47.600M523.400 251.200l238 47.600M533.800 262.900l238 47.600M544.200 274.600l238 47.600M554.600 286.300l238 47.600M565 298l238 47.600M575.400 309.700l238 47.600M585.800 321.400l238 47.600M596.200 333.100l238 47.600M606.600 344.800l238 47.600M617 356.500l238 47.600M627.400 368.200l238 47.600M637.800 379.900l238 47.600M648.200 391.600l238 47.600M658.600 403.300l238 47.600M669 415l238 47.600M679.400 426.700l238 47.600"/>
          </g>
          <g fill="none">
            <path d="M474 168L715 440M603 168L875 473" stroke="#8c0000"/>
            <path d="M642 168L687 219M394 348L419 377" stroke="#e00000"/>
            <path d="M238 180L497 235" stroke="#f00000" stroke-width="1.300"/>
            <path d="M497 235L750 289" stroke="#f00000" stroke-dasharray="6 2"/>
            <path d="M234 336L670 432" stroke="#f00000" stroke-width="1.300"/>
          </g>
          <g fill="none" stroke="#fff" stroke-width="1.600">
            <path d="M437 168L687 219L922 485L670 432ZM717 168L687 219M717 168L952 433L922 485M512 168L700 381L670 432M700 381L952 433"/>
          </g>
          <g fill="none" stroke="#fff">
            <path d="M554 175L742 385" stroke-width="3.500" stroke-dasharray="9 12.500"/>
            <path d="M686 176L908 426" stroke-width="3.500" stroke-dasharray="9 12.600"/>
            <path d="M745 390L905 424" stroke-width="6" stroke-linecap="round" stroke-dasharray="3 13.400"/>
          </g>
          <path d="M663 297L668 302L827 335L824 330" fill="none" stroke="#ffff00" stroke-width="2"/>
          <g fill="none" stroke="#0a8a0a">
            <circle cx="448" cy="181" r="12"/><circle cx="503" cy="181" r="12"/><circle cx="652" cy="181" r="12"/><circle cx="246" cy="182" r="12"/><circle cx="246" cy="342" r="12"/>
          </g>
          <g class="lab">
            <text x="448" y="186" text-anchor="middle">7</text><text x="503" y="186" text-anchor="middle">B</text><text x="652" y="186" text-anchor="middle">8</text><text x="241" y="347" text-anchor="middle">A</text>
          </g>
          <text class="reb" x="584" y="367" textLength="186">FBZJ-1 : C18@200</text>
          <g>
            <path d="M288 626L309 592" stroke="#1e82ff" stroke-width="4"/><path d="M303 594L312 584L311 598Z" fill="#1e82ff" stroke="#1e82ff"/>
            <path d="M302 578h9l-9 9h9" fill="none" stroke="#1e82ff"/>
            <path d="M288 626L270 605" stroke="#14e614" stroke-width="4"/><path d="M264 598L276 603L268 609Z" fill="#14e614" stroke="#14e614"/>
            <path d="M274 601l4 6M282 600l-8 11" fill="none" stroke="#14e614"/>
            <path d="M288 626L316 630" stroke="#f00000" stroke-width="4"/><path d="M325 632L315 627L316 635Z" fill="#f00000" stroke="#f00000"/>
            <path d="M307 619l9 9M316 619l-9 9" fill="none" stroke="#f00000"/>
          </g>
        </svg>
        <div class="panel">
          <div class="ptitle">钢筋显示控制面板</div>
          <div class="pbody">
            <label class="chk"><i class="ck"></i>底筋</label>
            <label class="chk"><i class="ck"></i>显示其它图元</label>
            <label class="chk"><i class="ck"></i>显示详细公式</label>
          </div>
        </div>
      </div>

      <div class="bar r5">
        <div class="grp g5a">
          <span class="it"><svg class="ic"><use href="#ortho"/></svg>正交</span>
          <span class="it on w76 b5"><svg class="ic"><use href="#snap"/></svg>对象捕捉</span>
          <span class="it b5l"><svg class="ic"><use href="#dyn"/></svg>动态输入</span>
        </div>
        <div class="grp g5b">
          <i class="grip"></i>
          <span class="it"><svg class="ic"><use href="#cross"/></svg>交点</span>
          <span class="it on w51 b5"><svg class="ic"><use href="#perp"/></svg>垂点</span>
          <span class="it on w51 b5 nb"><svg class="ic"><use href="#mid"/></svg>中点</span>
          <span class="it"><svg class="ic"><use href="#vertex"/></svg>顶点</span>
          <span class="it"><svg class="ic"><use href="#coord"/></svg>坐标</span>
        </div>
        <div class="grp g5c">
          <i class="grip"></i>
          <span class="combo c52">不偏移<i class="dd"></i></span>
          <i class="sep sl"></i>
          <span class="lbl xl">X=</span>
          <span class="spin w58">0<i class="sp"></i></span>
          <span class="lbl">mm</span>
          <span class="lbl m3">Y=</span>
          <span class="spin w58">0<i class="sp"></i></span>
          <span class="lbl">mm</span>
          <i class="sep sl sl2"></i>
          <i class="box"></i>
          <span class="rot">旋转</span>
          <span class="spin w69">0.000<i class="sp"></i></span>
          <span class="lbl">°</span>
        </div>
      </div>
    </main>
  </div>

  <footer class="status">
    <span class="st w148">X=125126 Y=9042</span>
    <span class="st w78 zh">层高:<b>3.55m</b></span>
    <span class="st w98 zh">底标高:<b>-3.58m</b></span>
    <span class="st w47">1(9)</span>
    <span class="st fill"></span>
    <span class="st w70">370 FPS</span>
  </footer>

  <div class="task">
    <span class="start"><svg width="16" height="16"><use href="#win"/></svg></span>
    <div class="search">
      <i class="ring"></i>
      <span>在这里输入你要搜索的内容</span>
      <svg class="micr" width="11" height="17"><use href="#mic"/></svg>
    </div>
    <div class="apps">
      <span class="tapp"><svg width="22" height="22"><use href="#fan"/></svg></span>
      <span class="tapp"><svg width="20" height="20"><use href="#swirl"/></svg></span>
      <i class="tsep"></i>
      <span class="tapp"><svg width="22" height="22"><use href="#edge"/></svg></span>
      <span class="tapp"><svg width="22" height="24"><use href="#store"/></svg></span>
      <span class="tapp"><svg width="22" height="20"><use href="#folder"/></svg></span>
      <span class="tapp act"><svg width="24" height="24"><use href="#gg"/></svg></span>
      <span class="tapp act"><svg width="24" height="24"><use href="#gg2"/></svg></span>
      <span class="tapp act"><svg width="24" height="24"><use href="#note"/></svg></span>
      <span class="tapp act"><svg width="24" height="24"><use href="#bplus"/></svg></span>
      <span class="tapp act"><svg width="24" height="24"><use href="#ge"/></svg></span>
    </div>
    <div class="cpu"><span>59%</span><span>CPU使用</span></div>
    <div class="tray">
      <svg width="12" height="7" viewBox="0 0 12 7"><path d="M.5 6.500L6 1l5.500 5.500" fill="none" stroke="#e6e6e6"/></svg>
      <svg width="20" height="14"><use href="#batt"/></svg>
      <svg width="18" height="16"><use href="#wifi"/></svg>
      <svg width="18" height="16"><use href="#spk"/></svg>
      <span class="zhong">中</span>
      <svg width="16" height="16"><use href="#sogou"/></svg>
    </div>
    <div class="clock"><span>20:48</span><span>2017/8/15</span></div>
    <div class="notif"><svg width="18" height="16"><use href="#noti"/></svg><b>4</b></div>
  </div>

  <div class="widget">
    <div class="ball"><span>67%</span></div>
    <svg class="arr a-up" width="8" height="9" viewBox="0 0 8 9"><path d="M4 0l4 4H5.500v5h-3V4H0z" fill="#e8675a"/></svg>
    <svg class="arr a-dn" width="8" height="9" viewBox="0 0 8 9"><path d="M4 9l4-4H5.500V0h-3v5H0z" fill="#3cb55a"/></svg>
    <span class="rate r-up">0K/s</span>
    <span class="rate r-dn">0K/s</span>
    <span class="plus">+</span>
    <i class="reddot"></i>
  </div>
</div>
</body>
</html>
```
FILE: styles.css
```css
* { box-sizing: border-box; }
html, body { margin: 0; padding: 0; }
body { width: 1366px; height: 768px; overflow: hidden; font: 12px/16px "Noto Sans CJK SC", "Noto Sans", sans-serif; color: #111; background: #f0f0f0; }
i, em { font-style: normal; }
.defs { position: absolute; }
.page { position: relative; width: 1366px; height: 768px; display: flex; flex-direction: column; background: #f0f0f0; overflow: hidden; }

.title { height: 23px; background: #fff; display: flex; align-items: center; padding-left: 2px; font-size: 12.680px; white-space: nowrap; flex: none; }
.ticon { width: 13px; height: 14px; margin-right: 3px; }
.winctl { margin-left: auto; display: flex; align-items: center; gap: 35px; padding-right: 20px; }

.menu { height: 31px; display: flex; align-items: center; gap: 10.700px; padding-left: 7px; white-space: nowrap; flex: none; }
.mextra { display: flex; align-items: center; margin-left: -2px; flex: 1; }
.mextra .it { gap: 4px; }
.m11 { margin-left: 5px; }
.tip { width: 187px; height: 29px; margin-left: 19px; background: #f8f8f8; color: #3f7000; text-align: left; padding: 6px 0 0 29px; border-radius: 3px; flex: none; }
.m6 { margin-left: 6px; }
.m10 { margin-left: 10px; }
.bell { width: 14px; height: 16px; }
.more { font: 700 13px/12px "Liberation Sans", sans-serif; color: #222; }
.mr { margin-left: auto; margin-right: 3px; }

.bar { display: flex; align-items: stretch; white-space: nowrap; flex: none; }
.grp { display: flex; align-items: center; gap: 7px; background: #f8f8f8; border-radius: 3px; }
.it { display: inline-flex; align-items: center; gap: 4px; height: 100%; }
.ic { width: 16px; height: 16px; flex: none; }
.w18 { width: 18px; }
.off { color: #9a9a9a; }
.it.on { background: #e1eefa; border: 1px solid #0078d7; padding-left: 4px; height: 26px; flex: none; }
.sigma { width: 16px; text-align: center; font: 700 13px/16px "Liberation Serif", serif; }
.dd { display: inline-block; width: 0; height: 0; border: 3px solid transparent; border-top: 3px solid #222; border-bottom-width: 0; margin-left: 3px; flex: none; }
.off .dd { border-top-color: #999; }
.n4 { margin-left: 1px; }
.m2 { margin-left: 2px; }
.m3 { margin-left: 3px; }
.m16 { margin-left: 16px; }
.m50 { margin-left: 47px; }
.m104 { margin-left: 96px; }
.sep { width: 1px; height: 19px; background: #c8c8c8; margin-right: -2px; flex: none; }
.s3 { margin: 0 1px; }
.s0 { margin-right: 0; }
.grip { width: 2px; height: 15px; flex: none; background: repeating-linear-gradient(#999 0 2px, transparent 2px 4px); margin-right: -4px; }

.tb1 { height: 26px; margin-bottom: 2px; }
.g1a { width: 150px; padding-left: 4px; gap: 5px; margin-left: 1px; }
.g1b { width: 505px; padding-left: 5px; margin-left: 1px; }
.g1more { align-self: center; width: 49px; opacity: 0; }
.g1c { width: 640px; padding-left: 3px; }
.white { background: #fff; padding-right: 3px; }
.d7 { margin-left: -6px; }
.w75 { width: 75px; margin-left: -3px; }
.g1c .sep { margin-left: -4px; margin-right: -3px; }
.w66 { width: 66px; }
.w76 { width: 76px; padding-left: 3px !important; }
.w51 { width: 51px; padding-left: 3px !important; gap: 3px !important; }

.work { height: 625px; display: flex; flex: none; }

.nav { width: 234px; flex: none; display: flex; flex-direction: column; padding-top: 2px; }
.navhead { height: 16px; width: 230px; display: flex; align-items: center; border-bottom: 2px solid #8c8c8c; border-top: 1px solid #a8a8a8; padding-left: 1px; line-height: 12px; flex: none; }
.pin { margin-left: auto; margin-right: 8px; }
.navx { width: 17px; height: 13px; border: 1px solid #a0a0a0; background: #fff; display: flex; align-items: center; justify-content: center; margin-right: 1px; }
.navbtn { width: 229px; height: 22px; flex: none; margin-top: 1px; display: flex; align-items: center; justify-content: center; border-top: 1px solid #a6a6a6; border-left: 1px solid #d0d0d0; border-right: 1px solid #a6a6a6; border-bottom: 1px solid #a6a6a6; background: #f0f0f0; font-size: 12.500px; }
.low { height: 21px; }
.treetools { height: 25px; width: 229px; display: flex; align-items: center; gap: 5px; padding: 3px 0 0 6px; flex: none; background: #f5f5f5; }
.treebox { width: 229px; height: 489px; margin-left: 2px; border: 1px solid #a0a0a0; background: #fff; display: flex; flex: none; overflow: hidden; }
.tree { position: relative; flex: 1; padding-top: 2px; overflow: hidden; font-size: 12px; }
.guides { position: absolute; left: 0; top: 1px; }
.r { height: 16px; display: flex; align-items: center; padding-left: 43px; position: relative; white-space: nowrap; letter-spacing: .1px; }
.r b { font: 400 10px/16px "Liberation Mono", monospace; position: relative; top: 1px; }
.top { padding-left: 8px; }
.chev { width: 7px; height: 7px; border-right: 1.500px solid #555; border-bottom: 1.500px solid #555; transform: rotate(45deg) translate(-1px, -2px); margin-right: 8px; flex: none; background: transparent; }
.shut { border-color: #aaa; transform: rotate(-45deg); }
.fd { width: 17px; height: 13px; margin-right: 4px; flex: none; }
.ti { width: 15px; height: 15px; margin-right: 5px; flex: none; }
.cur { background: linear-gradient(90deg, transparent 41px, #e6f0fa 41px, #e6f0fa 60px, transparent 60px); }
.sel { background: #d9d9d9; padding-right: 2px; height: 16px; line-height: 16px; }
.newb { width: 15px; height: 14px; border: 1px solid #2268b5; display: inline-flex; gap: 1px; padding: 1px; background: #cfe4fa; margin-left: 2px; }
.newb i { flex: 1; background: #4a98e8; }
.new { font: 700 8px/8px "Liberation Sans", sans-serif; color: #222; background: #ffd400; padding: 0 1px; align-self: flex-start; margin: 0 0 0 2px; }
.sb { width: 16px; flex: none; background: #f0f0f0; display: flex; flex-direction: column; margin-right: 3px; }
.sba { height: 17px; flex: none; display: flex; align-items: center; justify-content: center; }
.sba::before { content: ""; width: 6px; height: 6px; border-left: 2px solid #606060; border-top: 2px solid #606060; }
.up::before { transform: rotate(45deg) translate(1px, 1px); }
.dn::before { transform: rotate(225deg) translate(1px, 1px); }
.sbgap { height: 177px; flex: none; }
.sbt { height: 265px; background: #cdcdcd; flex: none; }
.dn { margin-top: auto; }

.right { flex: 1; display: flex; flex-direction: column; padding-top: 2px; min-width: 0; }
.r2 { height: 25px; margin-left: 2px; }
.g2a { width: 789px; padding-left: 3px; }
.g2a .dd { margin-right: -6px; }
.r3 { height: 27px; margin-top: 2px; margin-left: 2px; }
.g3a { width: 565px; padding-left: 5px; gap: 7px; }
.g3a .combo { margin-right: -4px; }
.g3a .c59 { padding-left: 4px; }
.g3a .sep { margin-left: 3px; margin-right: -3px; }
.g3b { width: 422px; margin-left: 74px; padding-left: 4px; }
.g3b .grip { margin-right: -2px; }
.g3b .dd { margin-right: -1px; }
.combo { height: 25px; background: #fff; display: inline-flex; align-items: center; padding-left: 2px; position: relative; flex: none; }
.combo .dd { position: absolute; right: 3px; top: 11px; }
.c59 { width: 59px; }
.c69 { width: 69px; }
.c52 { width: 52px; height: 24px; }
.r4 { height: 27px; margin-top: 2px; margin-left: 2px; }
.g4a { width: 1097px; padding-left: 3px; gap: 6.400px; }
.dk { margin-right: -3px; }
.cbox { width: 56px; height: 24px; border: 1px solid #888; background: #f5f5f5; position: relative; flex: none; margin: 0 -1px 0 1px; }
.cbox .dd { position: absolute; right: 4px; top: 10px; border-top-color: #999; }
.griptail { width: 22px; margin-left: 2px; background: #f8f8f8; display: flex; align-items: center; padding-left: 3px; }
.griptail .grip { background: repeating-linear-gradient(#999 0 2px, transparent 2px 4px); }
.nm { margin-left: -3px; }
.nm2 { margin-left: -4px; }

.canvas { position: relative; width: 1132px; height: 507px; margin-top: 1px; background: #000; flex: none; }
.draw { display: block; }
.lab text { fill: #c4c4c4; font: 14px "Liberation Sans", sans-serif; }
.reb { fill: #d8d8d8; font: 300 22px "Liberation Sans", sans-serif; }
.panel { position: absolute; left: 10px; top: 2px; width: 166px; height: 179px; background: #fff; border: 1px solid #8a8a8a; border-top-color: #fff; display: flex; flex-direction: column; }
.ptitle { height: 31px; padding: 7px 0 0 7px; color: #a8a8a8; font-size: 12px; flex: none; }
.pbody { flex: 1; border: 2px solid #8c8c8c; border-bottom-width: 1px; padding-top: 0; }
.chk { display: flex; align-items: center; height: 12px; line-height: 12px; margin-left: 2px; color: #000; }
.ck { width: 11px; height: 11px; border: 1px solid #808080; margin-right: 4px; position: relative; flex: none; background: #fff; }
.ck::after { content: ""; position: absolute; left: 2px; top: 0; width: 6px; height: 4px; border-left: 1px solid #333; border-bottom: 1px solid #333; transform: rotate(-45deg); }

.r5 { height: 27px; margin-top: 1px; margin-left: 2px; }
.r5 .it.on { height: 25px; }
.g5a { width: 210px; padding-left: 9px; gap: 4px; }
.b5l { margin-left: -2px; }
.g5b { width: 261px; margin-left: 3px; padding-left: 1px; gap: 0; }
.g5b .grip { margin-right: 5px; }
.g5b > .it { margin-right: 4px; }
.g5b > .b5 { margin-right: 0; }
.g5b > .nb { border-left: 0; margin-right: 4px; }
.g5c { margin-left: 3px; width: 409px; padding-left: 3px; gap: 3px; background: #f8f8f8; }
.g5c .grip { margin-right: -3px; }
.sl { margin: 0 -1px 0 8px; }
.sl2 { margin-left: 4px; }
.xl { margin-right: 2px; }
.lbl { color: #555; }
.spin { height: 23px; border: 1px solid #808080; background: #f8f8f8; display: inline-flex; align-items: center; justify-content: flex-end; color: #8c8c8c; padding-right: 15px; position: relative; font-size: 13px; flex: none; }
.w58 { width: 57px; }
.w69 { width: 69px; }
.sp { position: absolute; right: 4px; top: 3px; width: 7px; height: 15px; }
.sp::before, .sp::after { content: ""; position: absolute; left: 0; border: 3px solid transparent; }
.sp::before { top: 0; border-bottom: 4px solid #888; border-top-width: 0; }
.sp::after { bottom: 0; border-top: 4px solid #888; border-bottom-width: 0; }
.box { width: 11px; height: 11px; border: 1px solid #777; flex: none; margin-left: 1px; }
.rot { margin: 0 2px 0 5px; }

.status { height: 20px; margin-top: 1px; display: flex; gap: 3px; font: 10px/18px "Liberation Mono", monospace; flex: none; }
.st { border: 1px solid #d6d6d6; background: linear-gradient(#f8f8f8, #fff); padding-left: 1px; white-space: nowrap; flex: none; }
.zh { font-family: "Noto Sans CJK SC", sans-serif; font-size: 12px; padding-left: 1px; }
.zh b { font: 400 10px/18px "Liberation Mono", monospace; }
.st.fill { flex: 1; }
.w148 { width: 147px; }
.w78 { width: 77px; }
.w98 { width: 97px; }
.w47 { width: 46px; padding-left: 2px; }
.w70 { width: 70px; padding-left: 2px; }

.task { height: 40px; background: #0a1114; display: flex; align-items: center; color: #fff; position: relative; flex: none; }
.start { width: 48px; display: flex; justify-content: center; flex: none; }
.search { width: 344px; height: 40px; background: #333; display: flex; align-items: center; color: #9a9a9a; font-size: 12.500px; flex: none; padding-left: 12px; }
.ring { width: 17px; height: 17px; border: 2px solid #e8e8e8; border-radius: 50%; margin-right: 7px; flex: none; }
.micr { margin-left: auto; margin-right: 16px; }
.apps { width: 540px; display: flex; align-items: center; height: 40px; flex: none; padding-left: 2px; }
.tapp { width: 49.400px; height: 40px; display: flex; align-items: center; justify-content: center; flex: none; position: relative; }
.act::after { content: ""; position: absolute; left: 5px; right: 5px; bottom: 0; height: 2px; background: #76b9ed; }
.tsep { width: 1px; height: 16px; border-left: 1px solid #555; flex: none; margin: 0 13px 0 10px; }
.cpu { width: 80px; display: flex; flex-direction: column; align-items: center; line-height: 18px; position: absolute; left: 1009px; }
.tray { position: absolute; left: 1092px; display: flex; align-items: center; gap: 6px; }
.zhong { font-size: 13px; margin: 0 4px; }
.clock { position: absolute; left: 1246px; width: 64px; display: flex; flex-direction: column; align-items: center; line-height: 18px; }
.notif { position: absolute; left: 1324px; top: 13px; width: 26px; height: 22px; }
.notif b { position: absolute; left: 8px; top: 2px; width: 15px; height: 15px; border-radius: 50%; background: #333; border: 1px solid #999; font: 700 10px/13px "Liberation Sans", sans-serif; text-align: center; }

.widget { position: absolute; left: 896px; top: 38px; width: 127px; height: 39px; border-radius: 20px; background: linear-gradient(#fafafa, #e4e4e4); box-shadow: 0 1px 4px rgba(0, 0, 0, .45); }
.ball { position: absolute; left: 1px; top: -5px; width: 48px; height: 48px; border-radius: 50%; border: 2px solid #e8e8e8; box-shadow: 0 0 0 1px #aaa; background: linear-gradient(#1e7a4a 0, #2f8f58 26%, #49c964 27%, #49c964 100%); display: flex; align-items: center; justify-content: center; color: #eee; font: 15px "Liberation Sans", sans-serif; }
.arr { position: absolute; left: 52px; }
.a-up { top: 8px; }
.a-dn { top: 23px; }
.rate { position: absolute; left: 80px; font: 9px/10px "Liberation Sans", sans-serif; color: #222; }
.r-up { top: 7px; }
.r-dn { top: 22px; }
.plus { position: absolute; left: 103px; top: 11px; width: 16px; height: 16px; border-radius: 50%; background: #3f8ee0; color: #fff; font: 700 15px/16px "Liberation Sans", sans-serif; text-align: center; }
.reddot { position: absolute; left: 114px; top: 9px; width: 7px; height: 7px; border-radius: 50%; background: #e03030; }
```
